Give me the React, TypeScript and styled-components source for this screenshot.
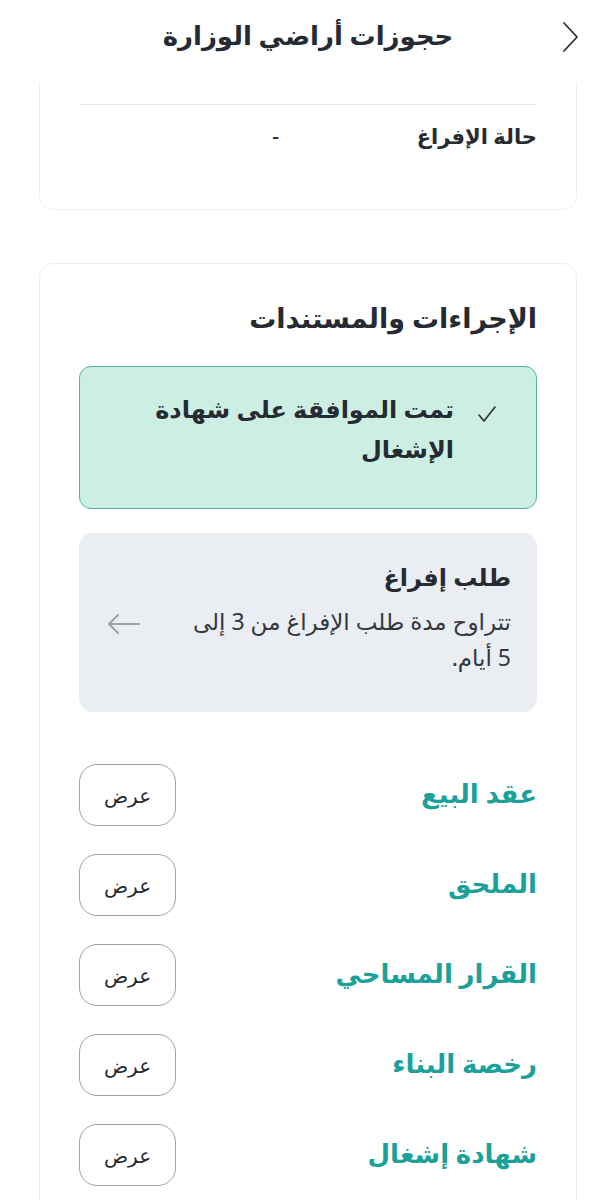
import styled, { createGlobalStyle } from 'styled-components';

const GlobalStyle = createGlobalStyle`
  html, body {
    margin: 0;
    padding: 0;
    background: #ffffff;
  }
  body {
    font-family: "Noto Sans", "DejaVu Sans", sans-serif;
    color: #262b33;
  }
  * { box-sizing: border-box; }
`;

interface InfoRow {
    label: string;
    value: string;
}

// first row is scrolled up under the header
const infoRows: InfoRow[] = [
    { label: '', value: '' },
    { label: 'حالة الإفراغ', value: '-' },
];

const documents = ['عقد البيع', 'الملحق', 'القرار المساحي', 'رخصة البناء', 'شهادة إشغال'];

const ChevronRight = () => (
    <svg width="18" height="32" viewBox="0 0 18 32" fill="none">
        <polyline points="3,2 16,16 3,30" stroke="#2b3038" strokeWidth="1.8" strokeLinecap="round" strokeLinejoin="round" />
    </svg>
);

const CheckIcon = () => (
    <svg width="18" height="18" viewBox="0 0 18 18" fill="none">
        <polyline points="1,10 6,16 17,2" stroke="#2b3038" strokeWidth="1.6" strokeLinecap="round" strokeLinejoin="round" />
    </svg>
);

const ArrowLeft = () => (
    <svg width="34" height="22" viewBox="0 0 34 22" fill="none">
        <line x1="2" y1="11" x2="32" y2="11" stroke="#9aa1ab" strokeWidth="2" strokeLinecap="round" />
        <polyline points="11,2 2,11 11,20" stroke="#9aa1ab" strokeWidth="2" strokeLinecap="round" strokeLinejoin="round" />
    </svg>
);

const App = () => {
    return (
        <Page dir="rtl">
            <GlobalStyle />
            <Header>
                <BackButton aria-label="رجوع"><ChevronRight /></BackButton>
                <Title>حجوزات أراضي الوزارة</Title>
            </Header>
            <ScrollArea>
                <Content>
                    <Card>
                        {infoRows.map((row, i) => (
                            <Row key={i} last={i === infoRows.length - 1}>
                                <Label>{row.label}</Label>
                                <Value>{row.value}</Value>
                            </Row>
                        ))}
                    </Card>

                    <Card>
                        <SectionTitle>الإجراءات والمستندات</SectionTitle>
                        <SuccessBox>
                            <CheckWrap><CheckIcon /></CheckWrap>
                            <SuccessText>تمت الموافقة على شهادة الإشغال</SuccessText>
                        </SuccessBox>
                        <RequestBox>
                            <RequestBody>
                                <RequestTitle>طلب إفراغ</RequestTitle>
                                <RequestText>تتراوح مدة طلب الإفراغ من 3 إلى 5 أيام.</RequestText>
                            </RequestBody>
                            <ArrowWrap><ArrowLeft /></ArrowWrap>
                        </RequestBox>
                        <DocList>
                            {documents.map((doc) => (
                                <DocRow key={doc}>
                                    <DocName>{doc}</DocName>
                                    <ViewButton>عرض</ViewButton>
                                </DocRow>
                            ))}
                        </DocList>
                    </Card>
                </Content>
            </ScrollArea>
        </Page>
    );
}

export default App;

const Page = styled.div`
  width: 616px;
  height: 1200px;
  display: flex;
  flex-direction: column;
  overflow: hidden;
  background: #ffffff;
`

const Header = styled.header`
  height: 82px;
  flex-shrink: 0;
  display: flex;
  align-items: center;
  justify-content: center;
  position: relative;
  background: #ffffff;
  z-index: 2;
`

const BackButton = styled.button`
  position: absolute;
  right: 37px;
  top: 21px;
  background: none;
  border: none;
  padding: 0;
  display: flex;
`

const Title = styled.h1`
  margin: 0;
  margin-top: -12px;
  font-size: 26px;
  font-weight: 700;
  color: #262b33;
`

const ScrollArea = styled.div`
  flex: 1;
  overflow: hidden;
`

const Content = styled.div`
  margin-top: -64px;
  padding: 0 39px;
  display: flex;
  flex-direction: column;
  gap: 53px;
`

const Card = styled.section`
  border: 1px solid #eceef1;
  border-radius: 14px;
  padding: 20px 39px 38px;
  background: #ffffff;
`

interface RowProps {
    last: boolean;
}

const Row = styled.div<RowProps>`
  height: 66px;
  display: grid;
  grid-template-columns: 258px 1fr;
  align-items: center;
  border-bottom: ${props => props.last ? 'none' : '1px solid #e6e8eb'};
`

const Label = styled.span`
  font-size: 21px;
  font-weight: 600;
  color: #262b33;
  margin-top: -4px;
`

const Value = styled.span`
  font-size: 21px;
  font-weight: 500;
  color: #262b33;
  margin-top: -4px;
`

const SectionTitle = styled.h2`
  margin: 16px 0 30px;
  font-size: 27px;
  font-weight: 700;
  line-height: 36px;
  color: #262b33;
`

const SuccessBox = styled.div`
  display: flex;
  align-items: flex-start;
  gap: 24px;
  min-height: 143px;
  padding: 22px 40px 30px;
  background: #cdefe3;
  border: 1.5px solid #4fb897;
  border-radius: 12px;
`

const CheckWrap = styled.div`
  margin-top: 16px;
  display: flex;
`

const SuccessText = styled.p`
  margin: 0;
  max-width: 330px;
  font-size: 24px;
  font-weight: 700;
  line-height: 40px;
  color: #262b33;
`

const RequestBox = styled.div`
  margin-top: 24px;
  min-height: 179px;
  display: flex;
  align-items: flex-start;
  justify-content: space-between;
  padding: 26px 26px 24px;
  background: #eaedf2;
  border-radius: 14px;
`

const RequestBody = styled.div`
  display: flex;
  flex-direction: column;
  gap: 8px;
  max-width: 328px;
`

const RequestTitle = styled.h3`
  margin: 0;
  font-size: 24px;
  font-weight: 700;
  line-height: 36px;
  color: #262b33;
`

const RequestText = styled.p`
  margin: 0;
  font-size: 23px;
  font-weight: 400;
  line-height: 36px;
  color: #333840;
`

const ArrowWrap = styled.div`
  display: flex;
  align-self: center;
  margin-left: 2px;
`

const DocList = styled.div`
  margin-top: 52px;
  display: flex;
  flex-direction: column;
  gap: 28px;
`

const DocRow = styled.div`
  display: flex;
  align-items: center;
  justify-content: space-between;
`

const DocName = styled.span`
  font-size: 26px;
  font-weight: 600;
  color: #1ba199;
  margin-top: -4px;
`

const ViewButton = styled.button`
  width: 97px;
  height: 62px;
  border: 1.5px solid #9ca3ab;
  border-radius: 18px;
  background: #ffffff;
  font-family: inherit;
  font-size: 20px;
  font-weight: 500;
  color: #262b33;
`
